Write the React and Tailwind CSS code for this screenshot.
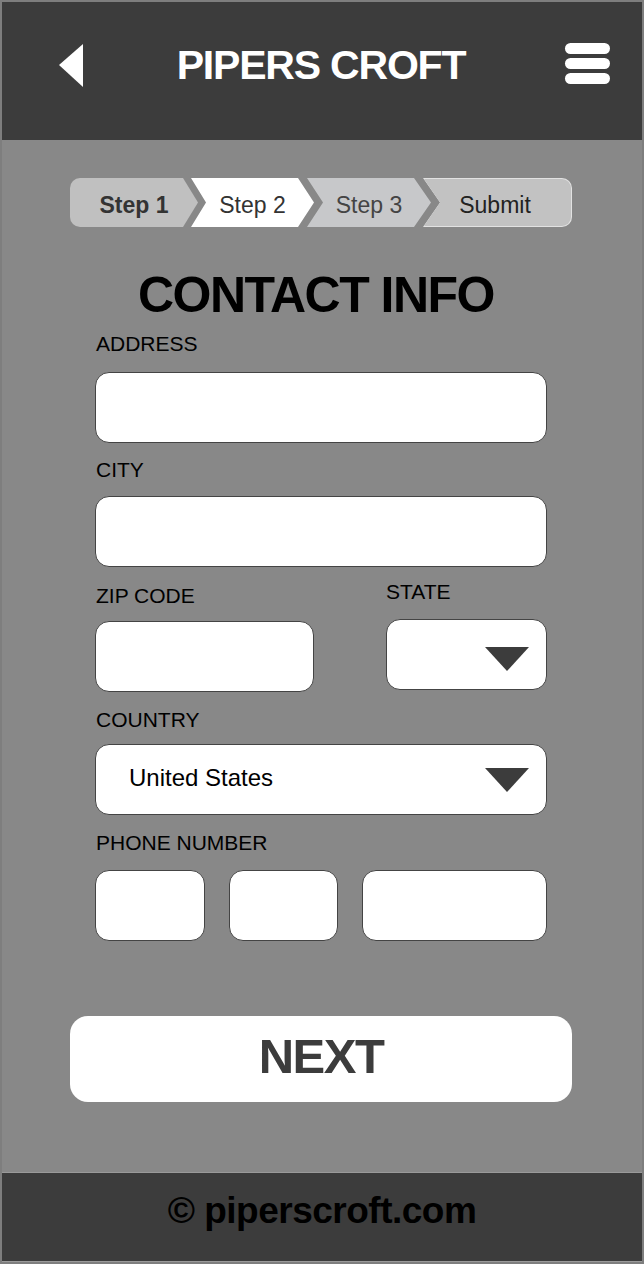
import React from "react";

const font = { fontFamily: '"Liberation Sans", Arial, Helvetica, sans-serif' };

function Input({ className = "", children }) {
  return (
    <div
      className={`h-[71px] bg-white border border-[#444444] rounded-[14px] ${className}`}
    >
      {children}
    </div>
  );
}

function Caret({ className = "" }) {
  return (
    <svg width="44" height="24" viewBox="0 0 44 24" className={className}>
      <polygon points="0,0 44,0 22,24" fill="#3c3c3c" />
    </svg>
  );
}

function Label({ children, className = "" }) {
  return (
    <div className={`text-[21px] leading-none text-black ${className}`}>
      {children}
    </div>
  );
}

export default function App() {
  return (
    <div
      className="w-[644px] h-[1264px] border-2 border-[#7e7e7e] flex flex-col bg-[#888888]"
      style={font}
    >
      {/* Header */}
      <header className="h-[138px] bg-[#3c3c3c] flex items-start pt-[41px] pl-[57px] pr-[32px]">
        <svg width="24" height="43" viewBox="0 0 24 43" className="mt-[1px]">
          <polygon points="24,0 24,43 0,21" fill="#ffffff" />
        </svg>
        <div className="flex-1 text-center pr-[6px] mt-[2px] text-white font-bold text-[41px] leading-none tracking-[-1.2px]">
          PIPERS CROFT
        </div>
        <div className="flex flex-col gap-[4px] w-[45px]">
          <div className="h-[11px] bg-white rounded-full" />
          <div className="h-[11px] bg-white rounded-full" />
          <div className="h-[11px] bg-white rounded-full" />
        </div>
      </header>

      {/* Main */}
      <main className="flex-1 flex flex-col pt-[38px]">
        {/* Stepper */}
        <div className="ml-[68px] w-[502px] h-[49px] flex text-[23px] leading-none">
          <div className="w-[128px] h-full bg-[#c0c0c0] rounded-l-[10px] [clip-path:polygon(0_0,113px_0,128px_50%,113px_100%,0_100%)] flex items-center justify-center pt-[5px] font-bold text-[#333333]">
            Step 1
          </div>
          <div className="ml-[-7px] w-[123px] h-full bg-white [clip-path:polygon(0_0,107px_0,123px_50%,107px_100%,0_100%,15px_50%)] flex items-center justify-center pt-[5px] text-[#333333]">
            Step 2
          </div>
          <div className="ml-[-7px] w-[124px] h-full bg-[#c7c8ca] [clip-path:polygon(0_0,107px_0,124px_50%,107px_100%,0_100%,16px_50%)] flex items-center justify-center pt-[5px] text-[#444444]">
            Step 3
          </div>
          <div className="ml-[-8px] flex-1 h-full bg-[#e2e2e2] rounded-r-[10px] [clip-path:polygon(0_0,100%_0,100%_100%,0_100%,17px_50%)] p-[1px]">
            <div className="w-full h-full bg-[#c2c2c2] rounded-r-[9px] [clip-path:polygon(0_0,100%_0,100%_100%,0_100%,16px_50%)] flex items-center justify-center pt-[5px] pl-[2px] pr-[7px] text-[#222222]">
              Submit
            </div>
          </div>
        </div>

        {/* Title */}
        <h1 className="mt-[43px] text-center pr-[12px] font-bold text-[50px] leading-none tracking-[-1.5px] text-black">
          CONTACT INFO
        </h1>

        {/* Form */}
        <div className="ml-[93px] w-[452px] flex flex-col">
          <Label className="mt-[13px] pl-[1px]">ADDRESS</Label>
          <Input className="mt-[18px]" />

          <Label className="mt-[16px] pl-[1px]">CITY</Label>
          <Input className="mt-[16px]" />

          <div className="flex justify-between items-start mt-[14px]">
            <div className="flex flex-col w-[219px] pt-[4px]">
              <Label className="pl-[1px]">ZIP CODE</Label>
              <Input className="mt-[15px]" />
            </div>
            <div className="flex flex-col w-[161px]">
              <Label>STATE</Label>
              <Input className="mt-[17px] flex items-center justify-end pr-[17px]">
                <Caret className="mt-[9px]" />
              </Input>
            </div>
          </div>

          <Label className="mt-[17px] pl-[1px]">COUNTRY</Label>
          <Input className="mt-[14px] flex items-center justify-between pl-[33px] pr-[17px]">
            <span className="text-[24px] leading-none text-black mt-[-4px]">
              United States
            </span>
            <Caret />
          </Input>

          <Label className="mt-[17px] pl-[1px]">PHONE NUMBER</Label>
          <div className="mt-[17px] flex gap-[24px]">
            <Input className="w-[110px]" />
            <Input className="w-[109px]" />
            <Input className="flex-1" />
          </div>
        </div>

        <button className="mt-[75px] ml-[68px] w-[502px] h-[86px] bg-white rounded-[18px] flex items-center justify-center pb-[5px] text-[#3c3c3c] font-bold text-[49px] leading-none tracking-[-1.5px]">
          NEXT
        </button>
      </main>

      {/* Footer */}
      <footer className="h-[90px] bg-[#3c3c3c] border-t border-b border-[#9a9a9a] flex items-center justify-center pb-[13px] text-black font-bold text-[37px] leading-none tracking-[-0.5px]">
        © piperscroft.com
      </footer>
    </div>
  );
}
